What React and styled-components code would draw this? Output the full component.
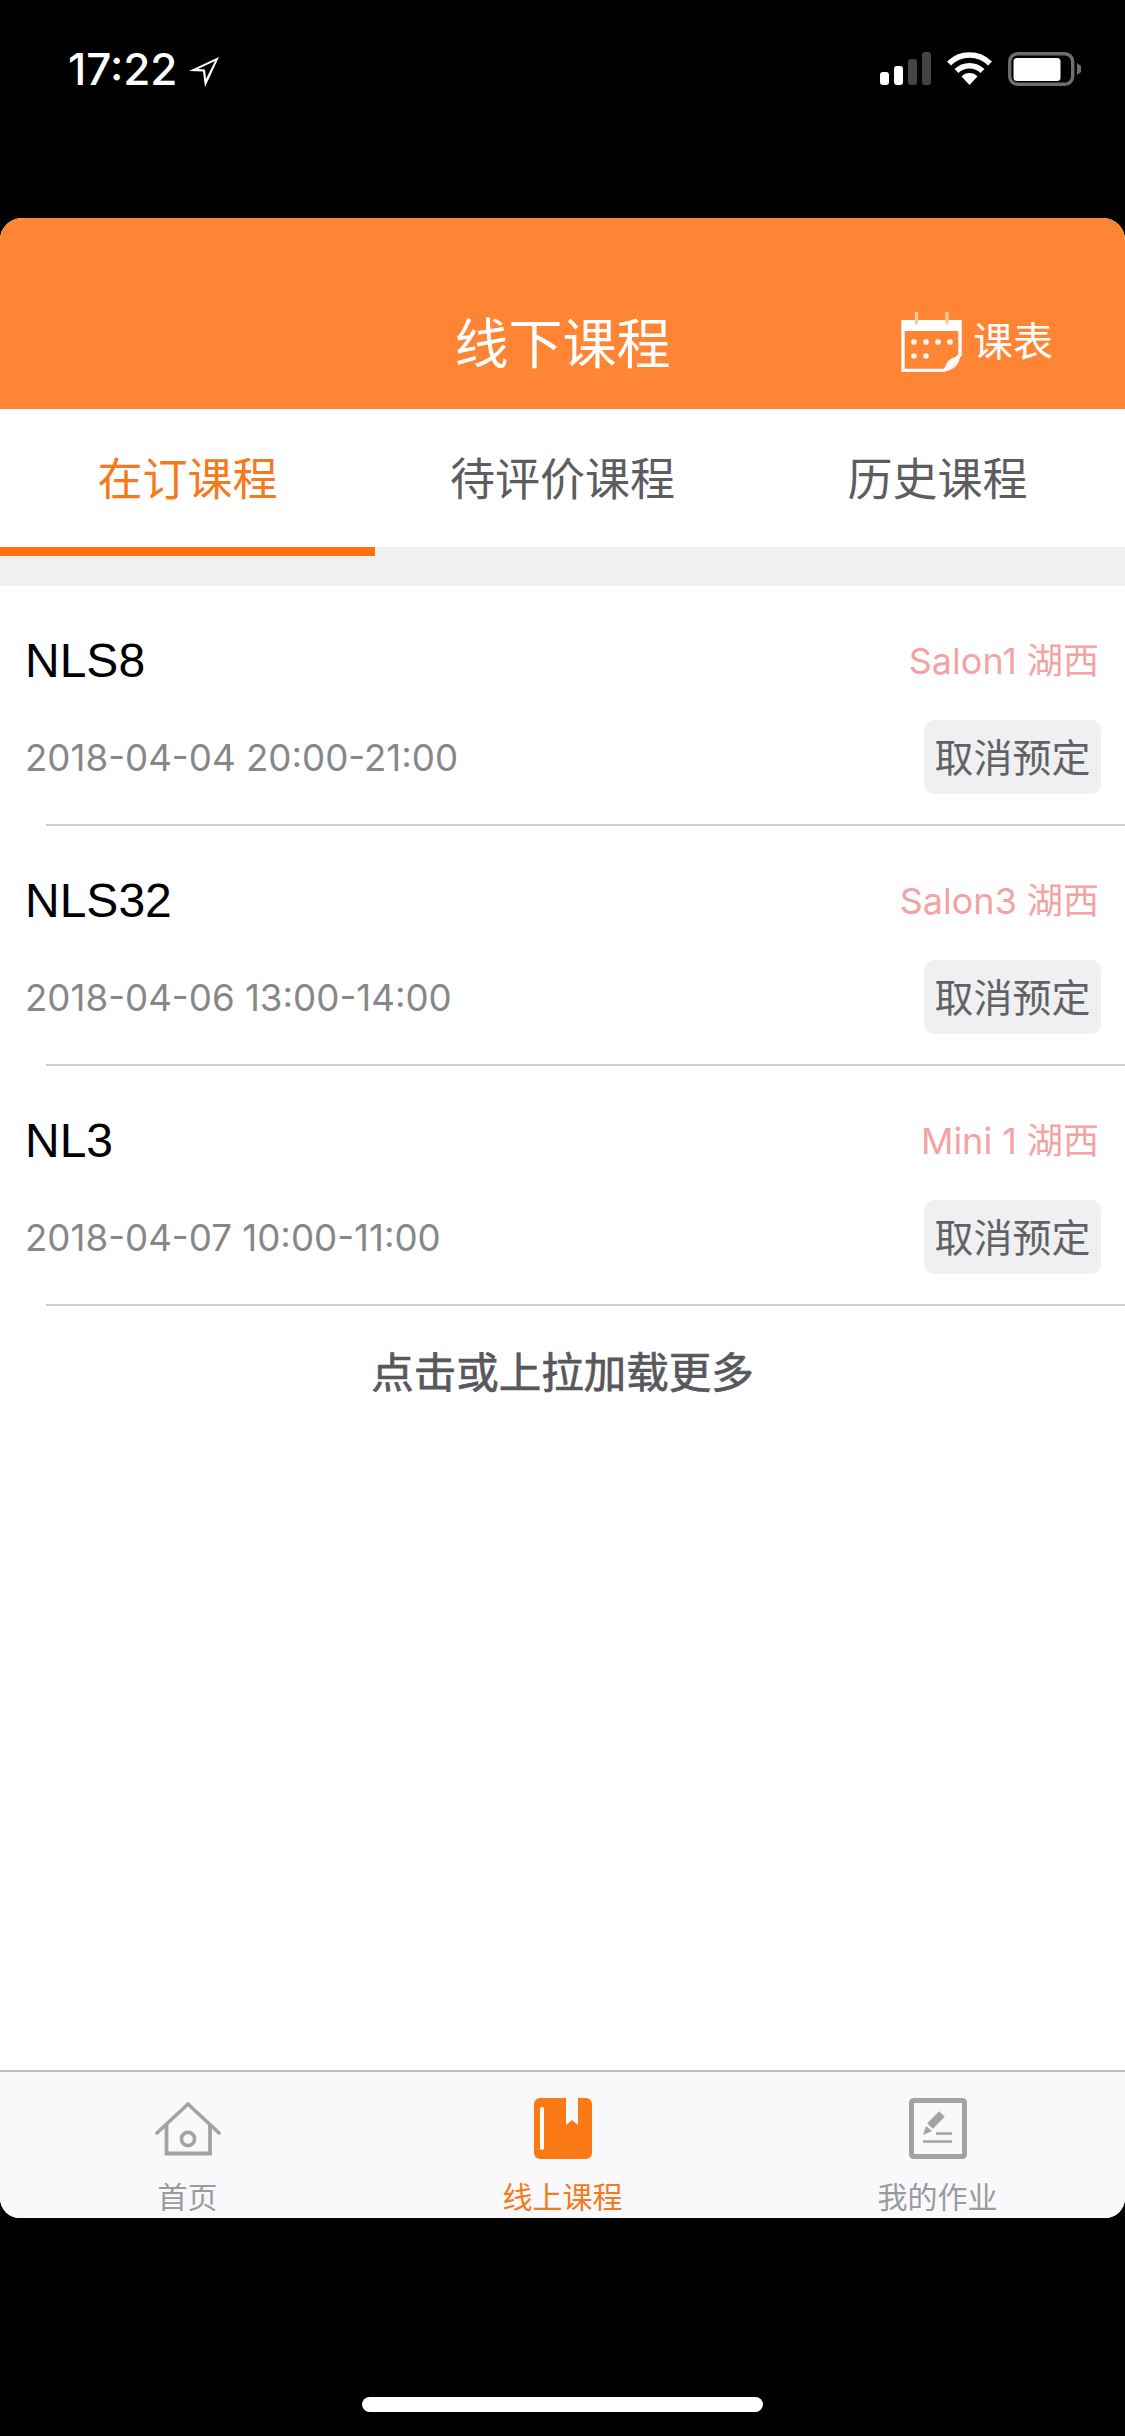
import React from "react";
import styled, { createGlobalStyle } from "styled-components";

const GlobalStyle = createGlobalStyle`
  html, body {
    margin: 0;
    padding: 0;
    background: #000;
  }

  * {
    box-sizing: border-box;
  }
`;

const FONT = `"Liberation Sans", "Noto Sans CJK SC", sans-serif`;
const NUMERIC_FONT = `Inter, "Noto Sans CJK SC", sans-serif`;
const ORANGE = "#f47a1c";

const Phone = styled.div`
  width: 1125px;
  height: 2436px;
  background: #000;
  font-family: ${FONT};
  display: flex;
  flex-direction: column;
  overflow: hidden;
`;

const StatusBar = styled.div`
  height: 218px;
  padding: 52px 44px 0 68px;
  display: flex;
  justify-content: space-between;
  align-items: flex-start;
  color: #fff;
`;

const StatusLeft = styled.div`
  display: flex;
  align-items: flex-start;
  gap: 12px;
`;

const Time = styled.span`
  font-family: ${NUMERIC_FONT};
  font-size: 44px;
  font-weight: 500;
  line-height: 34px;
`;

const StatusRight = styled.div`
  display: flex;
  align-items: flex-start;
  gap: 15px;
`;

const Screen = styled.div`
  height: 2000px;
  background: #fff;
  border-radius: 22px 22px 20px 20px;
  display: flex;
  flex-direction: column;
  overflow: hidden;
`;

const Header = styled.header`
  height: 191px;
  flex: none;
  background: #ff8534;
  color: #fff;
  padding: 91px 72px 0;
  display: grid;
  grid-template-columns: 1fr auto 1fr;
  align-items: start;
`;

const Title = styled.h1`
  grid-column: 2;
  margin: 3px 0 0;
  font-size: 54px;
  font-weight: 400;
  line-height: 66px;
`;

const Schedule = styled.div`
  grid-column: 3;
  justify-self: end;
  display: flex;
  align-items: center;
  gap: 11px;
  height: 66px;
  font-size: 40px;
`;

const ScheduleLabel = styled.span`
  margin-bottom: 6px;
`;

const Tabs = styled.nav`
  height: 138px;
  flex: none;
  display: flex;
`;

const Tab = styled.div`
  flex: 1;
  display: flex;
  align-items: center;
  justify-content: center;
  padding-bottom: 3px;
  font-size: 45px;
  color: ${props => (props.$active ? ORANGE : "#5d5d61")};
`;

const Track = styled.div`
  height: 39px;
  flex: none;
  background: #f0eff1;
`;

const Indicator = styled.div`
  width: 375px;
  height: 9px;
  background: #ff7010;
`;

const List = styled.div`
  flex: 1;
  display: flex;
  flex-direction: column;
`;

const Row = styled.div`
  padding-top: 48px;
`;

const RowLine = styled.div`
  display: flex;
  justify-content: space-between;
  align-items: center;
  padding: 0 24px 0 25px;
`;

const TimeLine = styled(RowLine)`
  margin-top: 32px;
`;

const Name = styled.span`
  font-size: 48px;
  line-height: 54px;
  color: #000;
`;

const Room = styled.span`
  font-family: ${NUMERIC_FONT};
  font-size: 36px;
  line-height: 54px;
  color: #f3a3a3;
  padding-right: 2px;
`;

const DateText = styled.span`
  font-family: ${NUMERIC_FONT};
  font-size: 36.7px;
  color: #87878b;
`;

const CancelButton = styled.button`
  width: 177px;
  height: 74px;
  padding: 0 0 5px;
  border: 0;
  border-radius: 10px;
  background: #f0eff1;
  color: #626266;
  font-family: ${FONT};
  font-size: 39px;
`;

const Divider = styled.div`
  height: 2px;
  margin: 30px 0 0 46px;
  background: #d2d0d6;
`;

const LoadMore = styled.div`
  margin-top: 41px;
  text-align: center;
  font-size: 42.5px;
  font-weight: 400;
  line-height: 54px;
  -webkit-text-stroke: 0.7px #58585c;
  color: #58585c;
`;

const BottomBar = styled.footer`
  height: 148px;
  flex: none;
  border-top: 2px solid #bdbcc2;
  background: #f9f8fb;
  display: flex;
`;

const BarItem = styled.div`
  flex: 1;
  display: flex;
  flex-direction: column;
  align-items: center;
  color: ${props => (props.$active ? ORANGE : "#9b9b9f")};
`;

const BarIcon = styled.div`
  height: 106px;
  padding-top: 26px;
  display: flex;
  justify-content: center;
`;

const BarLabel = styled.span`
  font-size: 30px;
  line-height: 40px;
`;

const HomeArea = styled.div`
  flex: 1;
  padding-top: 179px;
  display: flex;
  justify-content: center;
`;

const HomeIndicator = styled.div`
  width: 401px;
  height: 15px;
  border-radius: 8px;
  background: #fff;
`;

const LocationIcon = () => (
  <svg width="30" height="32" viewBox="0 0 30 32" style={{ marginTop: 4 }}>
    <path d="M30 1 L0 15 L14 15.5 L16 31 Z M26 5 L9 13 L16 13.5 L17 23 Z" fill="#fff" fillRule="evenodd" />
  </svg>
);

const SignalIcon = () => (
  <svg width="51" height="33" viewBox="0 0 51 33">
    <rect x="0" y="20" width="9" height="13" rx="3" fill="#fff" />
    <rect x="14" y="14" width="9" height="19" rx="3" fill="#fff" />
    <rect x="28" y="7" width="9" height="26" rx="3" fill="#444" />
    <rect x="42" y="0" width="9" height="33" rx="3" fill="#444" />
  </svg>
);

const WifiIcon = () => (
  <svg width="47" height="33" viewBox="0 0 47 33">
    <path d="M3 11.5 A 29 29 0 0 1 44 11.5" fill="none" stroke="#fff" strokeWidth="5.5" />
    <path d="M10.5 19 A 18.5 18.5 0 0 1 36.5 19" fill="none" stroke="#fff" strokeWidth="5.5" />
    <path d="M23.5 33 L15.5 24.5 A 11 11 0 0 1 31.5 24.5 Z" fill="#fff" />
  </svg>
);

const BatteryIcon = () => (
  <svg width="73" height="34" viewBox="0 0 73 34">
    <rect x="1.7" y="1.7" width="63" height="30.6" rx="8" fill="none" stroke="#6e6e6e" strokeWidth="3.4" />
    <rect x="5.5" y="6" width="47" height="23" rx="3.5" fill="#fff" />
    <path d="M69 11 L73 14 V20 L69 23 Z" fill="#6e6e6e" />
  </svg>
);

const CalendarIcon = () => (
  <svg width="61" height="60" viewBox="0 0 61 60">
    <path d="M2 8 H59 V19 H2 Z" fill="#fff" />
    <path d="M2 8 V58.5 H43 L59 43 V8" fill="none" stroke="#fff" strokeWidth="3.4" />
    <path d="M44 59 C44 52 46 46 59 44 C59 52 52 59 44 59 Z" fill="#fff" opacity="0.9" />
    <path d="M15.5 1 V11 M46 1 V11" stroke="#ffc9a0" strokeWidth="3.4" strokeLinecap="round" />
    <g fill="#fff" opacity="0.92">
      <circle cx="13" cy="30" r="2.8" />
      <circle cx="25" cy="30" r="2.8" />
      <circle cx="37" cy="30" r="2.8" />
      <circle cx="49" cy="30" r="2.8" />
      <circle cx="13" cy="44" r="2.8" />
      <circle cx="25" cy="44" r="2.8" />
    </g>
  </svg>
);

const HomeIcon = () => (
  <svg width="66" height="54" viewBox="0 0 66 54" style={{ marginTop: 4 }}>
    <path d="M2 31 L33 2 L64 31" fill="none" stroke="#a3a3a6" strokeWidth="3.6" strokeLinecap="round" strokeLinejoin="round" />
    <path d="M11.5 23 V51.5 H55 V23" fill="none" stroke="#a3a3a6" strokeWidth="3.8" />
    <circle cx="33" cy="37" r="6.6" fill="none" stroke="#a3a3a6" strokeWidth="3.6" />
  </svg>
);

const BookIcon = () => (
  <svg width="58" height="61" viewBox="0 0 58 61">
    <path
      d="M6 0 H32 V27 L38 22 L44 27 V0 H52 A6 6 0 0 1 58 6 V55 A6 6 0 0 1 52 61 H6 A6 6 0 0 1 0 55 V6 A6 6 0 0 1 6 0 Z"
      fill="#fb7a16"
    />
    <rect x="6" y="9" width="4" height="43" rx="2" fill="#fff" />
  </svg>
);

const HomeworkIcon = () => (
  <svg width="58" height="61" viewBox="0 0 58 61">
    <rect x="2.5" y="2.5" width="53" height="56" rx="2" fill="none" stroke="#a3a3a6" strokeWidth="5" />
    <path d="M21 28 L33 16" stroke="#a3a3a6" strokeWidth="8" />
    <path d="M14 37 L17 28 L23 33 Z" fill="#a3a3a6" />
    <path d="M27 35.5 H43 M14 43.5 H43" stroke="#a3a3a6" strokeWidth="2.6" />
  </svg>
);

const courses = [
  { name: "NLS8", room: "Salon1 湖西", time: "2018-04-04 20:00-21:00" },
  { name: "NLS32", room: "Salon3 湖西", time: "2018-04-06 13:00-14:00" },
  { name: "NL3", room: "Mini 1 湖西", time: "2018-04-07 10:00-11:00" }
];

const App = () => (
  <Phone>
    <GlobalStyle />
    <StatusBar>
      <StatusLeft>
        <Time>17:22</Time>
        <LocationIcon />
      </StatusLeft>
      <StatusRight>
        <SignalIcon />
        <WifiIcon />
        <BatteryIcon />
      </StatusRight>
    </StatusBar>
    <Screen>
      <Header>
        <Title>线下课程</Title>
        <Schedule>
          <CalendarIcon />
          <ScheduleLabel>课表</ScheduleLabel>
        </Schedule>
      </Header>
      <Tabs>
        <Tab $active>在订课程</Tab>
        <Tab>待评价课程</Tab>
        <Tab>历史课程</Tab>
      </Tabs>
      <Track>
        <Indicator />
      </Track>
      <List>
        {courses.map(course => (
          <Row key={course.name}>
            <RowLine>
              <Name>{course.name}</Name>
              <Room>{course.room}</Room>
            </RowLine>
            <TimeLine>
              <DateText>{course.time}</DateText>
              <CancelButton>取消预定</CancelButton>
            </TimeLine>
            <Divider />
          </Row>
        ))}
        <LoadMore>点击或上拉加载更多</LoadMore>
      </List>
      <BottomBar>
        <BarItem>
          <BarIcon>
            <HomeIcon />
          </BarIcon>
          <BarLabel>首页</BarLabel>
        </BarItem>
        <BarItem $active>
          <BarIcon>
            <BookIcon />
          </BarIcon>
          <BarLabel>线上课程</BarLabel>
        </BarItem>
        <BarItem>
          <BarIcon>
            <HomeworkIcon />
          </BarIcon>
          <BarLabel>我的作业</BarLabel>
        </BarItem>
      </BottomBar>
    </Screen>
    <HomeArea>
      <HomeIndicator />
    </HomeArea>
  </Phone>
);

export default App;
